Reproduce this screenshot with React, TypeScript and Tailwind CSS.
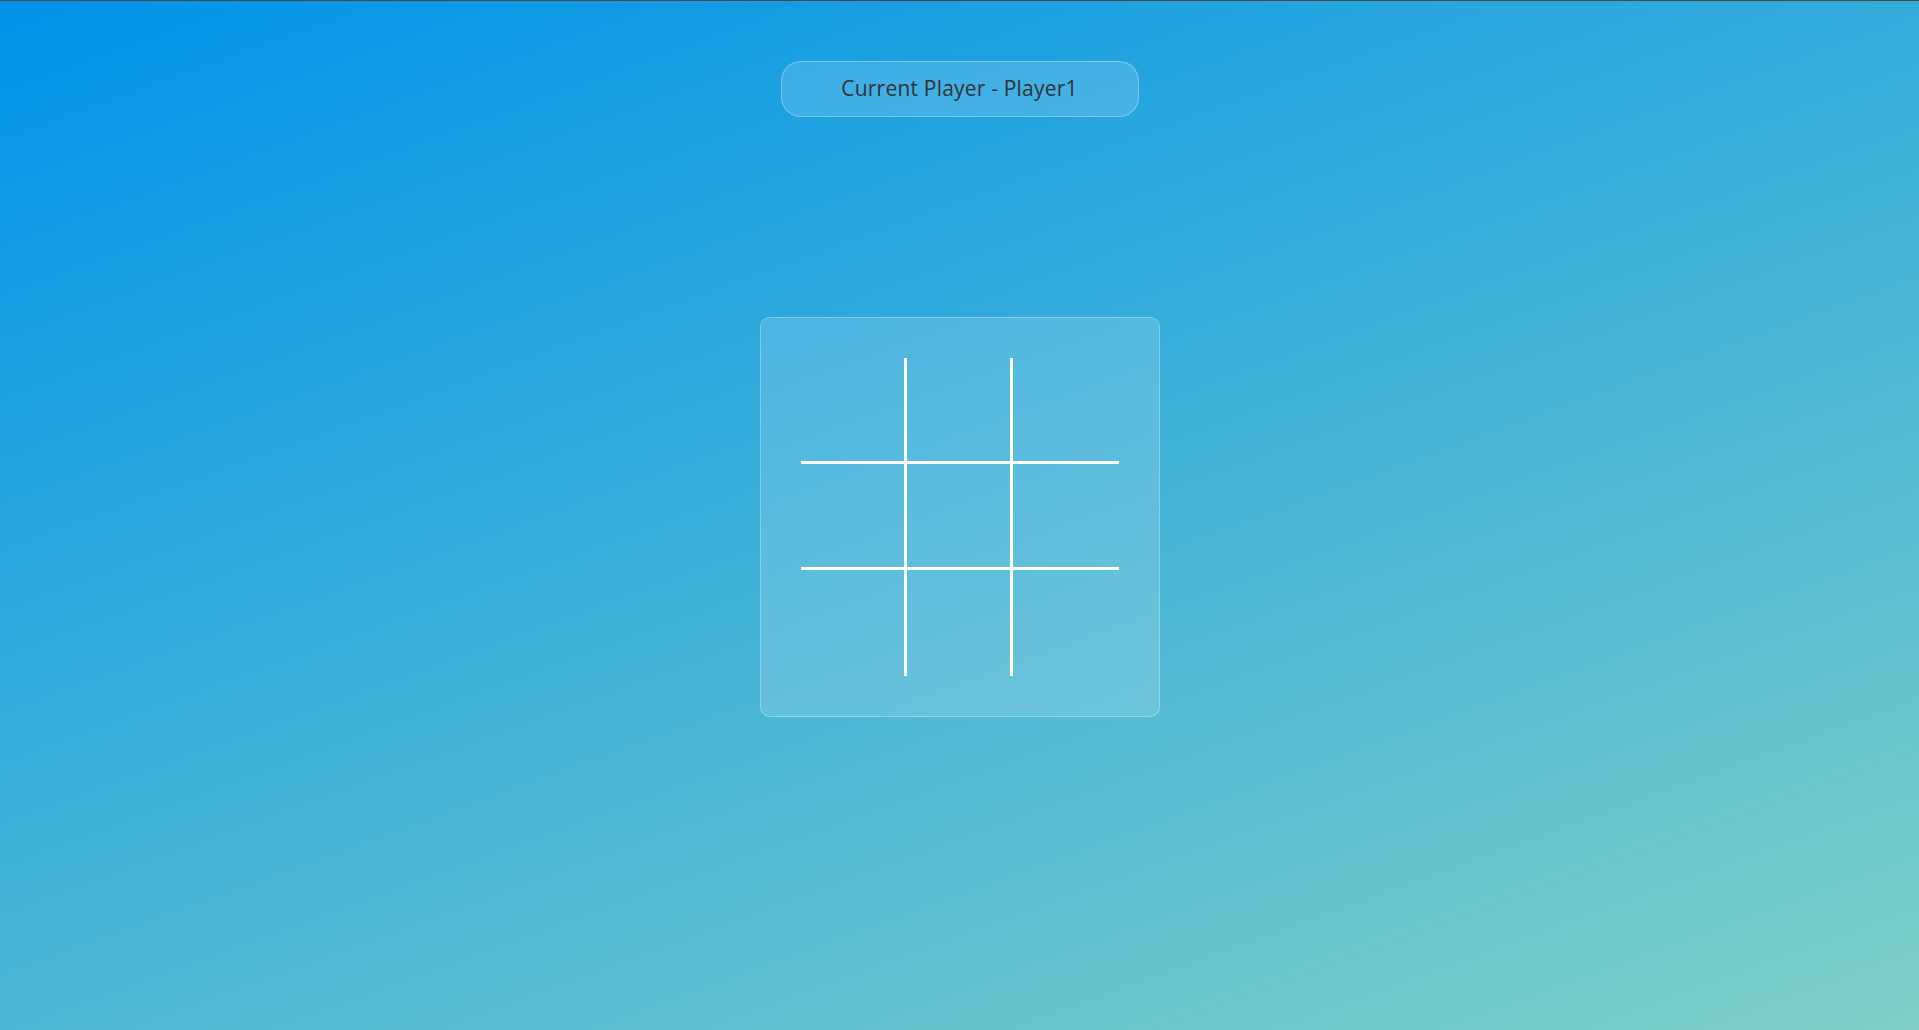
import { useState } from 'react'

const cellBorders = [
  'border-r-[3px] border-b-[3px]',
  'border-r-[3px] border-b-[3px]',
  'border-b-[3px]',
  'border-r-[3px] border-b-[3px]',
  'border-r-[3px] border-b-[3px]',
  'border-b-[3px]',
  'border-r-[3px]',
  'border-r-[3px]',
  '',
]

export default function App() {
  const [cells, setCells] = useState<string[]>(Array(9).fill(''))
  const [player, setPlayer] = useState(1)

  const handleClick = (i: number) => {
    if (cells[i]) return
    const next = [...cells]
    next[i] = player === 1 ? 'X' : 'O'
    setCells(next)
    setPlayer(player === 1 ? 2 : 1)
  }

  return (
    <div
      className="min-h-screen w-full border-t border-[#4a4a4a] bg-[#0093E9] bg-[linear-gradient(160deg,#0093E9_0%,#80D0C7_100%)] flex flex-col items-center pt-[60px]"
      style={{ fontFamily: '"Open Sans", "Liberation Sans", sans-serif' }}
    >
      <div className="w-[358px] h-[56px] rounded-[20px] bg-white/15 border border-white/30 flex items-center justify-center text-[21px] text-[#333333] tracking-[0.2px]">
        Current Player - Player{player}
      </div>

      <div className="mt-[200px] w-[400px] h-[400px] rounded-[10px] bg-white/15 border border-white/30 flex items-center justify-center">
        <div className="grid grid-cols-[106px_106px_106px] grid-rows-[106px_106px_106px]">
          {cells.map((c, i) => (
            <div
              key={i}
              onClick={() => handleClick(i)}
              className={`border-white flex items-center justify-center text-5xl text-white cursor-pointer ${cellBorders[i]}`}
            >
              {c}
            </div>
          ))}
        </div>
      </div>
    </div>
  )
}
